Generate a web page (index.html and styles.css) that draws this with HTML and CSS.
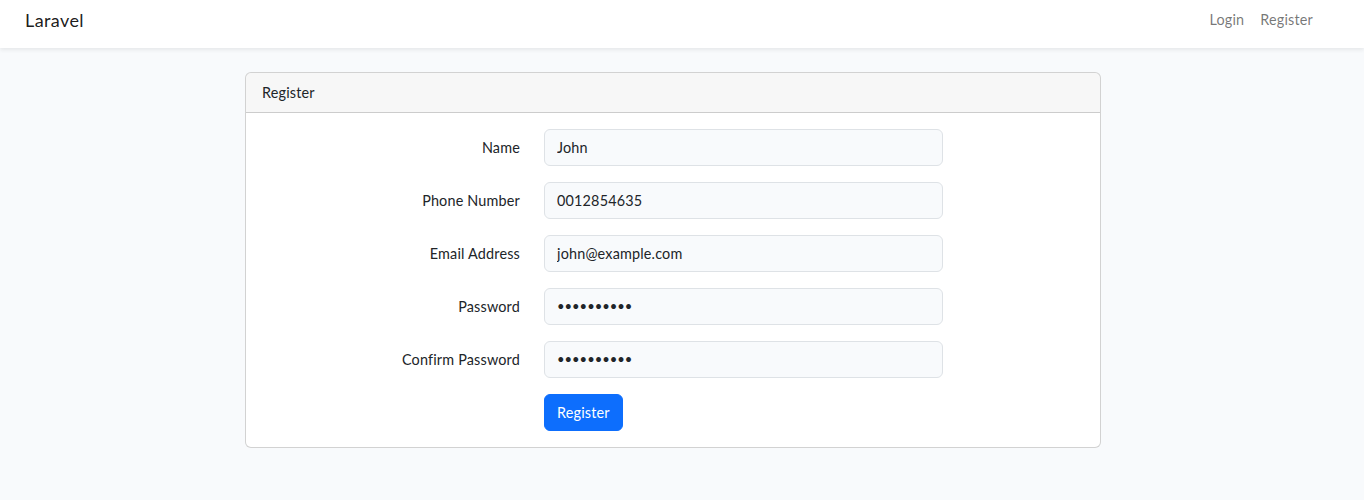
FILE: index.html
```html
<!DOCTYPE html>
<html lang="en">
<head>
<meta charset="utf-8">
<title>Laravel</title>
<link rel="stylesheet" href="styles.css">
</head>
<body>
  <nav class="navbar">
    <div class="nav-container">
      <a class="brand" href="#">Laravel</a>
      <ul class="nav-links">
        <li><a class="nav-link" href="#">Login</a></li>
        <li><a class="nav-link" href="#">Register</a></li>
      </ul>
    </div>
  </nav>
  <main class="main">
    <div class="card">
      <div class="card-header">Register</div>
      <div class="card-body">
        <form class="form">
          <div class="form-row">
            <label class="form-label" for="name">Name</label>
            <div class="field"><input class="form-control" id="name" type="text" value="John"></div>
          </div>
          <div class="form-row">
            <label class="form-label" for="phone">Phone Number</label>
            <div class="field"><input class="form-control" id="phone" type="text" value="0012854635"></div>
          </div>
          <div class="form-row">
            <label class="form-label" for="email">Email Address</label>
            <div class="field"><input class="form-control" id="email" type="email" value="john@example.com"></div>
          </div>
          <div class="form-row">
            <label class="form-label" for="password">Password</label>
            <div class="field"><input class="form-control pw" id="password" type="text" value="••••••••••"></div>
          </div>
          <div class="form-row">
            <label class="form-label" for="password-confirm">Confirm Password</label>
            <div class="field"><input class="form-control pw" id="password-confirm" type="text" value="••••••••••"></div>
          </div>
          <div class="form-row">
            <span class="form-label"></span>
            <div class="field"><button type="button" class="btn-primary">Register</button></div>
          </div>
        </form>
      </div>
    </div>
  </main>
</body>
</html>
```

FILE: styles.css
```css
* { box-sizing: border-box; }
html, body { margin: 0; padding: 0; }
body {
  background: #f8fafc;
  font-family: "Lato", "Noto Sans", sans-serif;
  font-size: 14.4px;
  line-height: 1.6;
  letter-spacing: 0.18px;
  color: #212529;
  min-height: 500px;
}
.navbar {
  background: #fff;
  height: 48px;
  box-shadow: 0 2px 4px rgba(0,0,0,0.075);
}
.nav-container {
  width: 1320px;
  margin-left: 13px;
  padding: 0 12px;
  height: 48px;
  display: flex;
  align-items: center;
  justify-content: space-between;
}
.brand {
  font-size: 18px;
  line-height: 28.8px;
  letter-spacing: 0.4px;
  color: rgba(0,0,0,0.9);
  text-decoration: none;
  margin-top: -8px;
}
.nav-links {
  list-style: none;
  margin: -8px 0 0 0;
  padding: 0;
  display: flex;
}
.nav-link {
  display: block;
  padding: 8px;
  color: rgba(0,0,0,0.55);
  text-decoration: none;
}
.main {
  width: 1346px;
  padding: 24px 0;
  display: flex;
  justify-content: center;
}
.card {
  width: 856px;
  background: #fff;
  border: 1px solid rgba(0,0,0,0.175);
  border-radius: 6px;
}
.card-header {
  padding: 8px 16px;
  background: rgba(0,0,0,0.03);
  border-bottom: 1px solid rgba(0,0,0,0.175);
  border-radius: 5px 5px 0 0;
}
.card-body { padding: 16px; }
.form { display: flex; flex-direction: column; gap: 16px; }
.form-row { display: flex; gap: 24px; }
.form-label {
  width: 258px;
  flex: none;
  text-align: right;
  padding: 7px 0;
}
.field { width: 399px; flex: none; }
.form-control {
  display: block;
  width: 100%;
  padding: 6px 12px;
  font: inherit;
  line-height: 1.6;
  letter-spacing: inherit;
  color: #212529;
  background: #f8fafc;
  border: 1px solid #dee2e6;
  border-radius: 6px;
  outline: none;
}
.form-control.pw {
  font-size: 13px;
  line-height: 23.04px;
  letter-spacing: 0;
}
.btn-primary {
  font: inherit;
  line-height: 1.6;
  letter-spacing: inherit;
  padding: 6px 12px;
  color: #fff;
  background: #0d6efd;
  border: 1px solid #0d6efd;
  border-radius: 6px;
}
```
